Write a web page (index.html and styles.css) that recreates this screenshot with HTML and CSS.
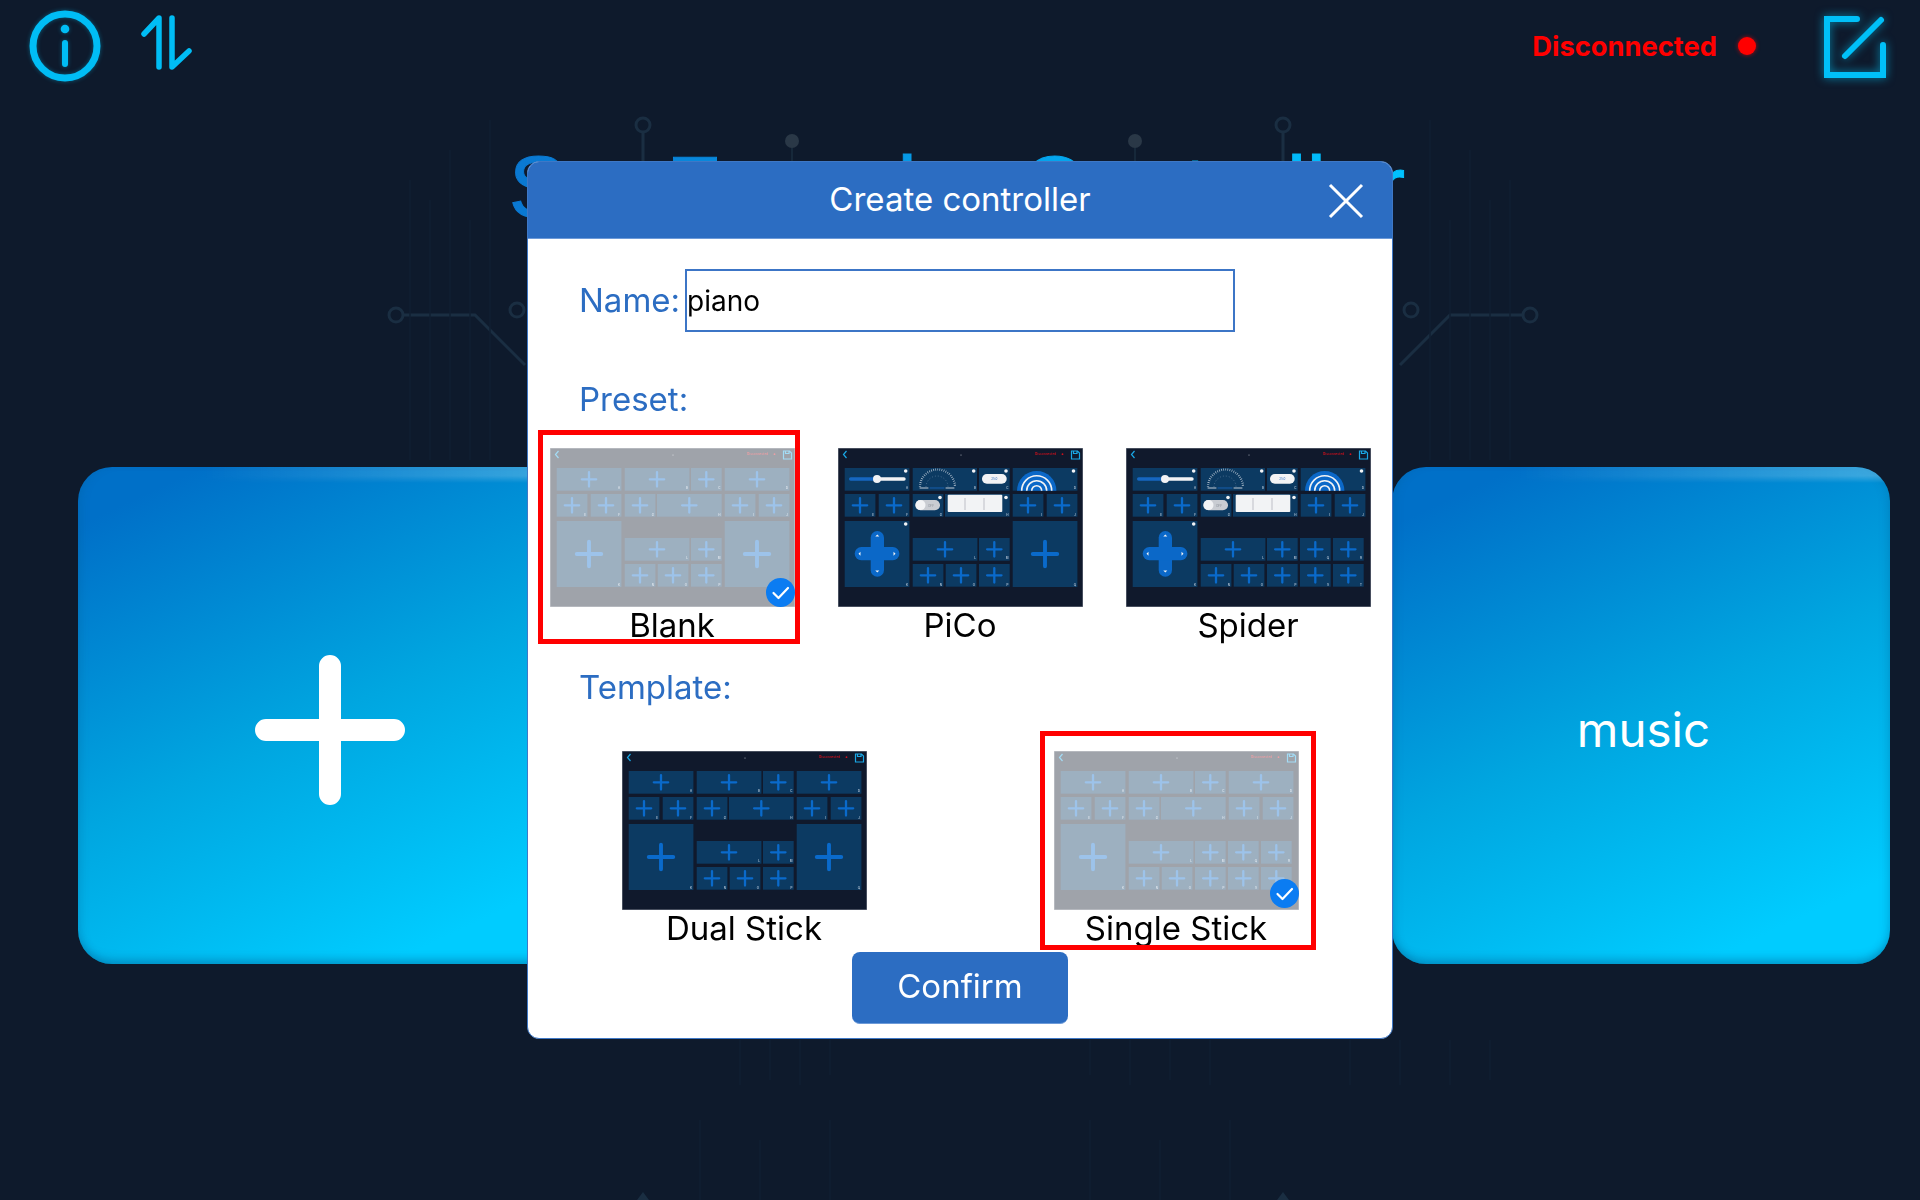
FILE: index.html
```html
<!DOCTYPE html>
<html lang="en">
<head>
<meta charset="utf-8">
<title>Create controller</title>
<link rel="stylesheet" href="styles.css">
</head>
<body>
<svg class="sprite" aria-hidden="true">
  <defs>
    <path id="plus" class="pl" d="M-7.2 0H7.2M0-7.2V7.2"/>
    <g id="cw"><rect class="c" width="64.7" height="22.7"/><use href="#plus" x="32.3" y="11.3"/></g>
    <g id="cn"><rect class="c" width="30.7" height="22.7"/><use href="#plus" x="15.3" y="11.3"/></g>
    <g id="cb"><rect class="c" width="64.7" height="66"/><use href="#plus" transform="translate(32.3 33) scale(1.7)"/></g>
    <g id="chrome">
      <rect class="tbg" width="245" height="159"/>
      <path class="tline" d="M8.5 3 5.5 6.5 8.5 10"/>
      <circle class="tdot" cx="123" cy="7" r=".5"/>
      <text class="tred" x="197" y="7.2">Disconnected</text>
      <circle class="tr" cx="224.5" cy="6.2" r=".9"/>
      <path class="tline" d="M233.5 3h6l2 2v6h-8zM235.5 3v2.5h3.5V3"/>
    </g>
    <g id="lab-top">
      <text class="lb" x="70" y="41">A</text><text class="lb" x="138" y="41">B</text><text class="lb" x="170.5" y="41">C</text><text class="lb" x="238" y="41">D</text>
      <text class="lb" x="36" y="67.5">E</text><text class="lb" x="70" y="67.5">F</text><text class="lb" x="104" y="67.5">G</text><text class="lb" x="170.5" y="67.5">H</text><text class="lb" x="204" y="67.5">I</text><text class="lb" x="238" y="67.5">J</text>
    </g>
    <g id="rows-plain">
      <use href="#cw" x="6.7" y="20"/><use href="#cw" x="74.7" y="20"/><use href="#cn" x="141" y="20"/><use href="#cw" x="174.7" y="20"/>
      <use href="#cn" x="6.7" y="46"/><use href="#cn" x="40.7" y="46"/><use href="#cn" x="74.7" y="46"/><use href="#cw" x="107" y="46"/><use href="#cn" x="174.7" y="46"/><use href="#cn" x="208.7" y="46"/>
      <use href="#lab-top"/>
    </g>
    <g id="rows-widgets">
      <rect class="c" x="6.7" y="20" width="64.7" height="22.7"/>
      <path class="strk-w" d="M39 31H66"/><path class="strk-b" d="M12.7 31H39"/><circle class="wh" cx="39" cy="31" r="4"/>
      <rect class="c" x="74.7" y="20" width="64.3" height="22.7"/>
      <path class="gauge" d="M82 39A17.5 17.5 0 0 1 117 39"/><path class="gauge2" d="M88 39A11 11 0 0 1 110 39"/>
      <path class="strk-w thin" d="M82 40H90M108 40H116"/><path class="strk-b thin" d="M92 40H106"/>
      <rect class="c" x="141" y="20" width="30.7" height="22.7"/>
      <rect class="wh" x="144" y="26" width="24.7" height="9.7" rx="4.8"/><text class="val" x="156.3" y="32.4">25.0</text>
      <rect class="c" x="174.7" y="20" width="64.7" height="22.7"/>
      <path class="rb" d="M179 42.700a19.700 19.700 0 0 1 39.400 0z"/>
      <path class="rw" d="M183.700 42.700a15 15 0 0 1 30 0M188.700 42.700a10 10 0 0 1 20 0M193.700 42.700a5 5 0 0 1 10 0"/>
      <use href="#cn" x="6.700" y="46"/><use href="#cn" x="40.700" y="46"/>
      <rect class="c" x="74.700" y="46" width="30.700" height="22.700"/>
      <rect class="sw" x="77.300" y="52" width="24.700" height="10.300" rx="5.100"/><circle class="wh" cx="82.500" cy="57.100" r="5"/><text class="off" x="93" y="59">OFF</text>
      <rect class="c" x="107" y="46" width="64.700" height="22.700"/>
      <rect class="wh" x="109.700" y="46.700" width="54.600" height="17.300" rx="1"/><path class="tick" d="M127 50V62M146 50V62"/>
      <use href="#cn" x="174.700" y="46"/><use href="#cn" x="208.700" y="46"/>
      <circle class="wh" cx="67.700" cy="23" r="1.800"/><circle class="wh" cx="135.700" cy="23" r="1.800"/><circle class="wh" cx="168" cy="23" r="1.800"/><circle class="wh" cx="235.500" cy="23" r="1.800"/><circle class="wh" cx="102" cy="49.500" r="1.800"/><circle class="wh" cx="168" cy="49.500" r="1.800"/>
      <use href="#lab-top"/>
    </g>
    <g id="k-plain"><use href="#cb" x="6.700" y="73"/><text class="lb" x="70" y="138">K</text></g>
    <g id="k-pad">
      <rect class="c" x="6.700" y="73" width="64.700" height="66"/>
      <rect class="pad" x="32.700" y="83" width="13.300" height="45.700" rx="6.600"/>
      <rect class="pad" x="16.700" y="99" width="44.700" height="13.300" rx="6.600"/>
      <path class="wh" d="M39.300 86.500l2 2h-4zM39.300 124.500l2-2h-4zM20.500 105.700l2-2v4zM57.500 105.700l-2-2v4z"/>
      <circle class="wh" cx="67.700" cy="76" r="1.800"/><text class="lb" x="70" y="138">K</text>
    </g>
    <g id="mid">
      <use href="#cw" x="74.700" y="90"/><use href="#cn" x="141" y="90"/>
      <use href="#cn" x="74.700" y="116"/><use href="#cn" x="107.700" y="116"/><use href="#cn" x="141" y="116"/>
      <text class="lb" x="138" y="111">L</text><text class="lb" x="170.500" y="111">M</text><text class="lb" x="104" y="137.500">N</text><text class="lb" x="137" y="137.500">O</text><text class="lb" x="170.500" y="137.500">P</text>
    </g>
    <g id="q"><use href="#cb" x="174.700" y="73"/><text class="lb" x="238" y="138">Q</text></g>
    <g id="extra">
      <use href="#cn" x="174" y="90"/><use href="#cn" x="207" y="90"/><use href="#cn" x="174" y="116"/><use href="#cn" x="207" y="116"/>
      <text class="lb" x="203" y="111">Q</text><text class="lb" x="236" y="111">R</text><text class="lb" x="203" y="137.500">S</text><text class="lb" x="236" y="137.500">T</text>
    </g>
    <symbol id="th-dual" viewBox="0 0 245 159"><use href="#chrome"/><use href="#rows-plain"/><use href="#k-plain"/><use href="#mid"/><use href="#q"/></symbol>
    <symbol id="th-single" viewBox="0 0 245 159"><use href="#chrome"/><use href="#rows-plain"/><use href="#k-plain"/><use href="#mid"/><use href="#extra"/></symbol>
    <symbol id="th-pico" viewBox="0 0 245 159"><use href="#chrome"/><use href="#rows-widgets"/><use href="#k-pad"/><use href="#mid"/><use href="#q"/></symbol>
    <symbol id="th-spider" viewBox="0 0 245 159"><use href="#chrome"/><use href="#rows-widgets"/><use href="#k-pad"/><use href="#mid"/><use href="#extra"/></symbol>
    <g id="check"><circle class="chk-bg" cx="14.500" cy="14.500" r="14.500"/><path class="chk" d="M7.500 15l5 5 9.500-10"/></g>
  </defs>
</svg>

<svg class="circuit" viewBox="0 0 1920 1200" aria-hidden="true">
  <g class="cl">
    <circle cx="643" cy="125" r="7"/><path d="M643 132V240"/>
    <circle cx="1283" cy="125" r="7"/><path d="M1283 132V240"/>
    <circle cx="396" cy="315" r="7"/><path d="M403 315H475L525 365"/>
    <circle cx="1530" cy="315" r="7"/><path d="M1523 315H1450L1400 365"/>
    <circle cx="517" cy="310" r="7"/><circle cx="1411" cy="310" r="7"/>
  </g>
  <g class="cd"><circle cx="792" cy="141" r="7"/><path d="M792 148V200"/><circle cx="1135" cy="141" r="7"/><path d="M1135 148V200"/></g>
  <g class="cv">
    <path d="M410 180V460M430 200V460M450 150V460M470 220V460M490 120V460M1430 120V460M1450 220V460M1470 150V460M1490 200V460M1510 180V460"/>
    <path d="M740 1040V1085M770 1040V1080M800 1040V1085M830 1040V1075M1090 1040V1075M1130 1040V1085M1170 1040V1080M1210 1040V1085M1350 1040V1085M1400 1040V1085M1450 1040V1085M1490 1040V1080"/>
    <path d="M700 1120V1200M760 1140V1200M830 1120V1200M1090 1120V1200M1160 1140V1200M1230 1120V1200"/>
  </g>
  <path class="tri" d="M643 1192l6 8h-12zM1283 1192l6 8h-12z"/>
</svg>

<div class="page">
  <header class="top">
    <div class="top-left">
      <svg class="ic-info" viewBox="0 0 72 72"><circle cx="36" cy="36" r="32"/><path d="M36 33V54"/><circle class="fill" cx="36" cy="19" r="4.300"/></svg>
      <svg class="ic-swap" viewBox="0 0 54 56"><path d="M19 52V3L4 19M32 3V52L49 36"/></svg>
    </div>
    <div class="top-right">
      <span class="status">Disconnected</span>
      <span class="status-dot"></span>
      <svg class="ic-edit" viewBox="0 0 66 66"><path d="M36 6H6V62H62V32"/><path d="M24 43 60 7"/></svg>
    </div>
  </header>
  <h1 class="title">SunFounder Controller</h1>
  <main class="cards">
    <div class="card">
      <svg class="ic-add" viewBox="0 0 150 150"><path d="M75 11V139M11 75H139"/></svg>
    </div>
    <div class="card"><span class="card-name">music</span></div>
  </main>
</div>

<div class="overlay">
  <section class="modal">
    <header class="modal-head">
      <h2 class="modal-title">Create controller</h2>
      <svg class="ic-close" viewBox="0 0 36 36"><path d="M2 2 34 34M34 2 2 34"/></svg>
    </header>
    <div class="name-row">
      <label class="sec-label" for="name">Name:</label>
      <input class="name-input" id="name" type="text" value="piano">
    </div>
    <div class="sec-label sec-preset">Preset:</div>
    <div class="tiles tiles-3">
      <div class="tile">
        <div class="thumb is-on"><svg class="th"><use href="#th-dual"/></svg><svg class="badge" viewBox="0 0 29 29"><use href="#check"/></svg></div>
        <div class="cap">Blank</div>
        <span class="mark mark-preset"></span>
      </div>
      <div class="tile">
        <div class="thumb"><svg class="th"><use href="#th-pico"/></svg></div>
        <div class="cap">PiCo</div>
      </div>
      <div class="tile">
        <div class="thumb"><svg class="th"><use href="#th-spider"/></svg></div>
        <div class="cap">Spider</div>
      </div>
    </div>
    <div class="sec-label sec-template">Template:</div>
    <div class="tiles tiles-2">
      <div class="tile">
        <div class="thumb"><svg class="th"><use href="#th-dual"/></svg></div>
        <div class="cap">Dual Stick</div>
      </div>
      <div class="tile">
        <div class="thumb is-on"><svg class="th"><use href="#th-single"/></svg><svg class="badge badge-low" viewBox="0 0 29 29"><use href="#check"/></svg></div>
        <div class="cap">Single Stick</div>
        <span class="mark mark-template"></span>
      </div>
    </div>
    <div class="actions"><button class="confirm" type="button">Confirm</button></div>
  </section>
</div>
</body>
</html>
```
FILE: styles.css
```css
* { box-sizing: border-box; }
html, body { margin: 0; height: 100%; }
body {
  position: relative;
  overflow: hidden;
  background: #0e1a2c;
  font-family: Inter, "Noto Sans", sans-serif;
}
.sprite { position: absolute; width: 0; height: 0; }
.circuit { position: absolute; inset: 0; width: 1920px; height: 1200px; }
.cl { fill: none; stroke: #1a2e42; stroke-width: 3; }
.cd { fill: none; stroke: #16283a; stroke-width: 2; }
.cd circle { fill: #2a3847; stroke: none; }
.cv { fill: none; stroke: #101f32; stroke-width: 1.500; }
.tri { fill: #1a2e42; }

.page { position: relative; display: flex; flex-direction: column; height: 1200px; }
.top { display: flex; justify-content: space-between; height: 92px; padding: 10px 33px 0 29px; }
.top-left { display: flex; align-items: flex-start; gap: 39px; }
.top-right { display: flex; align-items: flex-start; }
.ic-info { width: 72px; height: 72px; fill: none; stroke: #00bdf5; stroke-width: 7; stroke-linecap: round; filter: drop-shadow(0 0 2px #00bff066); }
.ic-info path { stroke-width: 6; }
.ic-info .fill { fill: #00bdf5; stroke: none; }
.ic-swap { width: 54px; height: 56px; margin-top: 5px; fill: none; stroke: #00bdf5; stroke-width: 5.500; stroke-linecap: round; stroke-linejoin: round; }
.status { margin-top: 19.500px; font-size: 27.300px; line-height: 34px; font-weight: 700; color: #ff0000; }
.status-dot { width: 18px; height: 18px; margin: 27px 0 0 21px; border-radius: 50%; background: #ff0000; box-shadow: 0 0 4px #ff0000aa; }
.ic-edit { width: 66px; height: 66px; margin: 3px 0 0 65px; fill: none; stroke: #00c0f8; stroke-width: 6; stroke-linecap: round; filter: drop-shadow(0 0 5px #00bff0aa); }

.title {
  align-self: center;
  margin: 45px 6px 0 0;
  font: 400 88px/100px "Liberation Sans", Arial, sans-serif;
  letter-spacing: .3px;
  background: linear-gradient(90deg, #0a78d2, #00c2ff);
  -webkit-background-clip: text;
  background-clip: text;
  color: transparent;
  -webkit-text-stroke: 1px transparent;
}
.cards { display: flex; justify-content: space-between; margin-top: 230px; padding: 0 30px 0 78px; }
.card {
  position: relative;
  overflow: hidden;
  display: flex;
  align-items: center;
  justify-content: center;
  width: 498px;
  height: 497px;
  padding: 28px 0 0 5px;
  border-radius: 34px;
  background: linear-gradient(155deg, #0070c8 8%, #00a6e0 50%, #00ccff 88%);
  box-shadow:
    inset 0 -12px 10px -8px rgba(0, 90, 140, .45),
    inset 8px 0 10px -6px rgba(0, 90, 140, .28),
    inset -8px 0 10px -6px rgba(0, 90, 140, .28);
}
.card::before {
  content: "";
  position: absolute;
  top: 0;
  left: 0;
  right: 0;
  height: 16px;
  background: linear-gradient(90deg, rgba(255,255,255,0) 25%, rgba(255,255,255,.24) 100%);
  -webkit-mask-image: linear-gradient(180deg, #000 55%, transparent);
  mask-image: linear-gradient(180deg, #000 55%, transparent);
}
.ic-add { width: 150px; height: 150px; fill: none; stroke: #fff; stroke-width: 22; stroke-linecap: round; }
.card-name { font-size: 47.500px; line-height: 60px; color: #fff; }

.overlay { position: fixed; inset: 0; display: flex; align-items: center; justify-content: center; }
.modal { width: 866px; height: 878px; border: 1px solid #3e78c6; border-radius: 12px; background: #fff; overflow: hidden; }
.modal-head { position: relative; display: flex; align-items: center; justify-content: center; height: 77px; padding-bottom: 2px; background: #2c6dc2; border-bottom: 1px solid #6d9ad8; }
.modal-title { margin: 0; font-size: 33px; line-height: 40px; font-weight: 400; color: #fff; }
.ic-close { position: absolute; right: 28px; top: 21px; width: 36px; height: 36px; fill: none; stroke: #fff; stroke-width: 3; }
.name-row { display: grid; grid-template-columns: 157px 550px; align-items: center; margin-top: 30px; }
.sec-label { height: 40px; padding-left: 51px; font-size: 33px; line-height: 38px; color: #2c6dc2; }
.name-input { width: 550px; height: 63px; padding: 0; border: 2px solid #3c75c6; border-radius: 0; outline: 0; font: 400 28px Inter, sans-serif; color: #000; }
.sec-preset { margin-top: 48px; }
.sec-template { margin-top: 21px; }
.tiles { display: grid; }
.tiles-3 { grid-template-columns: repeat(3, 1fr); margin-top: 28px; }
.tiles-2 { grid-template-columns: repeat(2, 1fr); margin-top: 43px; }
.tile { position: relative; display: flex; flex-direction: column; align-items: center; }
.thumb { position: relative; width: 245px; height: 159px; }
.th { display: block; width: 245px; height: 159px; filter: blur(.4px); }
.is-on .th { opacity: .4; }
.cap { height: 40px; font-size: 33px; line-height: 37px; color: #000; }
.badge { position: absolute; right: 0; bottom: 0; width: 29px; height: 29px; }
.badge-low { bottom: 2px; }
.mark { position: absolute; border: 5px solid #ff0000; pointer-events: none; }
.mark-preset { left: 10px; top: -18px; width: 262px; height: 214px; }
.mark-template { left: 80px; top: -20px; width: 276px; height: 219px; }
.actions { display: flex; justify-content: center; margin-top: 2px; }
.confirm { width: 216px; height: 72px; padding: 0 0 3px; border: 0; border-bottom: 1px solid #6d9ad8; border-radius: 8px; background: #2c6dc2; font: 400 33px Inter, sans-serif; color: #fff; }

/* thumbnail parts */
.tbg { fill: #10192c; stroke: #7f8590; stroke-width: 1; }
.c { fill: #0c3a62; }
.pl { fill: none; stroke: #0a6acb; stroke-width: 2.300; stroke-linecap: round; }
.lb { font: 3px Inter, sans-serif; fill: #d8e2ee; text-anchor: end; }
.tline { fill: none; stroke: #1aa8e6; stroke-width: 1.200; }
.tdot { fill: #cfd6de; }
.tred { font: 600 3.200px Inter, sans-serif; fill: #d0101c; }
.tr { fill: #d0101c; }
.wh { fill: #f2f3f5; }
.strk-w { fill: none; stroke: #f2f3f5; stroke-width: 3.400; stroke-linecap: round; }
.strk-b { fill: none; stroke: #1667c1; stroke-width: 3.400; stroke-linecap: round; }
.thin { stroke-width: .8; }
.gauge { fill: none; stroke: #cfd8e2; stroke-width: 2.200; stroke-dasharray: .6 1.500; }
.gauge2 { fill: none; stroke: #7f9ab5; stroke-width: .5; stroke-dasharray: 1 2; }
.val { font: 3px Inter, sans-serif; fill: #2c6dc2; text-anchor: middle; }
.rb { fill: #0b68c8; }
.rw { fill: none; stroke: #f2f3f5; stroke-width: 1.600; }
.sw { fill: #c9ccd2; }
.off { font: 3.200px Inter, sans-serif; fill: #8a8f98; text-anchor: middle; }
.tick { fill: none; stroke: #9aa0a8; stroke-width: .6; }
.pad { fill: #0b68c8; }
.chk-bg { fill: #0b7cf2; }
.chk { fill: none; stroke: #fff; stroke-width: 2.200; stroke-linecap: round; stroke-linejoin: round; }
```
